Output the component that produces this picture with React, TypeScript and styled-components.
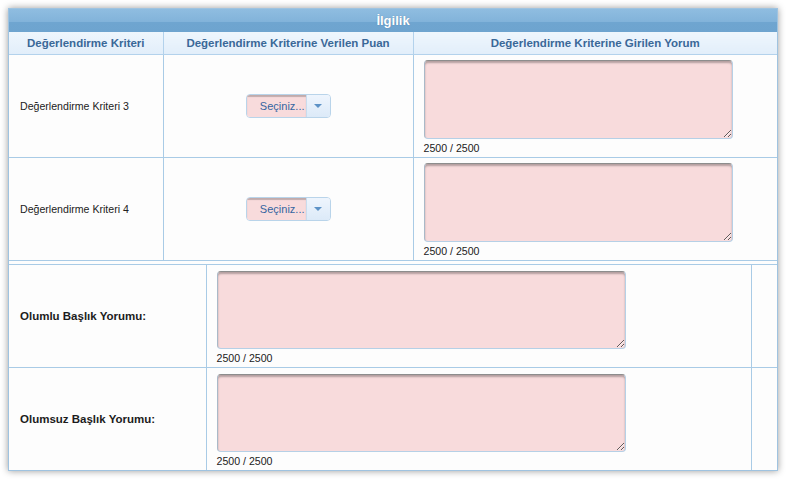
import React from "react";
import styled, { createGlobalStyle } from "styled-components";

const GlobalStyle = createGlobalStyle`
  html, body {
    margin: 0;
    padding: 0;
    background: #ffffff;
  }
  body {
    font-family: "Liberation Sans", Arial, sans-serif;
    font-size: 11px;
    color: #222222;
  }
`;

const Page = styled.div`
  padding: 8px 9px 12px 8px;
`;

const Panel = styled.div`
  width: 768px;
  border: 1px solid #9fc3e0;
  background: #fdfdfd;
  box-shadow: 0 0 7px rgba(0, 0, 0, 0.4);
`;

const TitleBar = styled.div`
  height: 23px;
  display: flex;
  align-items: center;
  justify-content: center;
  background: linear-gradient(to bottom, #8fbde0 0%, #82b3da 55%, #6fa5d0 56%, #6ea4cf 100%);
  color: #ffffff;
  font-weight: bold;
  font-size: 13px;
  text-shadow: 0 0 1px rgba(40, 80, 120, 0.5);
`;

const Grid = styled.table<{ $gap?: boolean }>`
  width: 100%;
  border-collapse: collapse;
  table-layout: fixed;
  margin-top: ${(p) => (p.$gap ? "3px" : "0")};
  border-top: ${(p) => (p.$gap ? "1px solid #a9cbe6" : "none")};
`;

const HeadCell = styled.th`
  box-sizing: border-box;
  height: 22px;
  padding: 0;
  background: linear-gradient(to bottom, #eef6fd, #e2eefa);
  border: 1px solid #b3d2ec;
  border-top: none;
  color: #3a6898;
  font-weight: bold;
  font-size: 11.5px;
  text-align: center;
  vertical-align: middle;

  &:first-child {
    border-left: none;
  }
  &:last-child {
    border-right: none;
  }
`;

const Cell = styled.td<{ $align?: string; $bold?: boolean }>`
  box-sizing: border-box;
  height: 103px;
  padding: 0 11px;
  border: 1px solid #a9cbe6;
  background: #fdfdfd;
  text-align: ${(p) => p.$align || "left"};
  vertical-align: middle;
  font-weight: ${(p) => (p.$bold ? "bold" : "normal")};
  font-size: ${(p) => (p.$bold ? "11.5px" : "10.6px")};
  color: ${(p) => (p.$bold ? "#1c1c1c" : "#222222")};

  &:first-child {
    border-left: none;
  }
  &:last-child {
    border-right: none;
  }
`;

const FieldCell = styled(Cell)<{ $top: number }>`
  vertical-align: top;
  padding: ${(p) => p.$top}px 10px 0 10px;
`;

const LastRow = styled.tr`
  td {
    border-bottom: none;
  }
`;

const Comment = styled.textarea<{ $w: number; $h: number }>`
  display: block;
  box-sizing: border-box;
  width: ${(p) => p.$w}px;
  height: ${(p) => p.$h}px;
  margin: 0;
  padding: 3px;
  background: #f8dbdc;
  border: 1px solid #b6d0e6;
  border-top-color: #8d8d8d;
  border-left-color: #a9b9c8;
  border-radius: 4px;
  box-shadow: inset 0 2px 2px rgba(0, 0, 0, 0.28);
  font-family: "Liberation Sans", Arial, sans-serif;
  font-size: 11px;
  outline: none;
`;

const Counter = styled.div`
  margin-top: 3px;
  font-size: 10.6px;
  font-weight: normal;
  color: #222222;
  line-height: 13px;
`;

const Select = styled.div`
  display: inline-flex;
  box-sizing: border-box;
  width: 85px;
  height: 24px;
  border: 1px solid #b9d4ea;
  border-radius: 4px;
  overflow: hidden;
  vertical-align: middle;
`;

const SelectValue = styled.div`
  flex: 1;
  display: flex;
  align-items: center;
  justify-content: flex-end;
  padding-right: 1px;
  background: #f8dbdc;
  box-shadow: inset 0 2px 1px rgba(0, 0, 0, 0.22);
  color: #3565a0;
  font-size: 11px;
`;

const SelectButton = styled.div`
  width: 23px;
  display: flex;
  align-items: center;
  justify-content: center;
  border-left: 1px solid #c8dcee;
  background: linear-gradient(to bottom, #eef5fd, #dceaf8);

  &::after {
    content: "";
    border-left: 4px solid transparent;
    border-right: 4px solid transparent;
    border-top: 4px solid #5d92c6;
  }
`;

const criteria = ["Değerlendirme Kriteri 3", "Değerlendirme Kriteri 4"];
const summaries = ["Olumlu Başlık Yorumu:", "Olumsuz Başlık Yorumu:"];

const CommentField: React.FC<{ w: number; h: number }> = ({ w, h }) => (
  <>
    <Comment $w={w} $h={h} />
    <Counter>2500 / 2500</Counter>
  </>
);

const App: React.FC = () => {
  return (
    <Page>
      <GlobalStyle />
      <Panel>
        <TitleBar>İlgilik</TitleBar>
        <Grid>
          <colgroup>
            <col style={{ width: 154 }} />
            <col style={{ width: 250 }} />
            <col />
          </colgroup>
          <thead>
            <tr>
              <HeadCell>Değerlendirme Kriteri</HeadCell>
              <HeadCell>Değerlendirme Kriterine Verilen Puan</HeadCell>
              <HeadCell>Değerlendirme Kriterine Girilen Yorum</HeadCell>
            </tr>
          </thead>
          <tbody>
            {criteria.map((c) => (
              <tr key={c}>
                <Cell>{c}</Cell>
                <Cell $align="center">
                  <Select>
                    <SelectValue>Seçiniz...</SelectValue>
                    <SelectButton />
                  </Select>
                </Cell>
                <FieldCell $top={5}>
                  <CommentField w={309} h={79} />
                </FieldCell>
              </tr>
            ))}
          </tbody>
        </Grid>
        <Grid $gap>
          <colgroup>
            <col style={{ width: 197 }} />
            <col style={{ width: 545 }} />
            <col />
          </colgroup>
          <tbody>
            {summaries.map((s, i) =>
              i === summaries.length - 1 ? (
                <LastRow key={s}>
                  <Cell $bold>{s}</Cell>
                  <FieldCell $top={6}>
                    <CommentField w={409} h={78} />
                  </FieldCell>
                  <Cell />
                </LastRow>
              ) : (
                <tr key={s}>
                  <Cell $bold>{s}</Cell>
                  <FieldCell $top={6}>
                    <CommentField w={409} h={78} />
                  </FieldCell>
                  <Cell />
                </tr>
              )
            )}
          </tbody>
        </Grid>
      </Panel>
    </Page>
  );
};

export default App;
